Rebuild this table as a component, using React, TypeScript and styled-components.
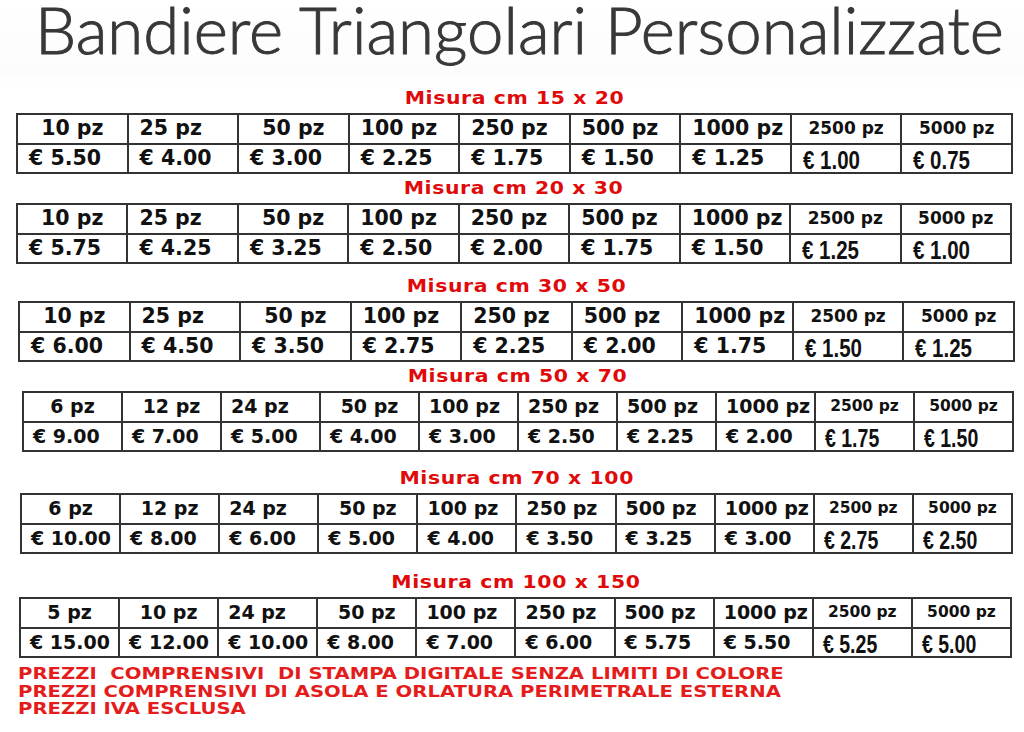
import React from "react";
import styled, { createGlobalStyle } from "styled-components";

const GlobalStyle = createGlobalStyle`
  html, body { margin: 0; padding: 0; background: #ffffff; }
  body { font-family: "DejaVu Sans", "Liberation Sans", sans-serif; color: #111; }
  * { box-sizing: border-box; }
`;

type Section = {
  size: string;
  qty: string[];
  prices: string[];
  gap: number;
  left: number;
  right: number;
};

const q9 = ["10 pz", "25 pz", "50 pz", "100 pz", "250 pz", "500 pz", "1000 pz", "2500 pz", "5000 pz"];
const q10 = ["6 pz", "12 pz", "24 pz", "50 pz", "100 pz", "250 pz", "500 pz", "1000 pz", "2500 pz", "5000 pz"];

const centered9 = [0, 2, 7, 8];
const centered10 = [0, 1, 3, 8, 9];

const sections: Section[] = [
  { size: "15 x 20", qty: q9, prices: ["5.50", "4.00", "3.00", "2.25", "1.75", "1.50", "1.25", "1.00", "0.75"], gap: 2, left: 16, right: 11 },
  { size: "20 x 30", qty: q9, prices: ["5.75", "4.25", "3.25", "2.50", "2.00", "1.75", "1.50", "1.25", "1.00"], gap: 4, left: 16, right: 12 },
  { size: "30 x 50", qty: q9, prices: ["6.00", "4.50", "3.50", "2.75", "2.25", "2.00", "1.75", "1.50", "1.25"], gap: 12, left: 18, right: 9 },
  { size: "50 x 70", qty: q10, prices: ["9.00", "7.00", "5.00", "4.00", "3.00", "2.50", "2.25", "2.00", "1.75", "1.50"], gap: 4, left: 22, right: 10 },
  { size: "70 x 100", qty: q10, prices: ["10.00", "8.00", "6.00", "5.00", "4.00", "3.50", "3.25", "3.00", "2.75", "2.50"], gap: 16, left: 20, right: 11 },
  { size: "100 x 150", qty: ["5 pz", "10 pz", "24 pz", "50 pz", "100 pz", "250 pz", "500 pz", "1000 pz", "2500 pz", "5000 pz"], prices: ["15.00", "12.00", "10.00", "8.00", "7.00", "6.00", "5.75", "5.50", "5.25", "5.00"], gap: 18, left: 19, right: 12 },
];

const Page = styled.div`
  width: 1024px;
  display: flex;
  flex-direction: column;
`;

const TitleBar = styled.header`
  height: 86px;
  padding-left: 14px;
  display: flex;
  justify-content: center;
  align-items: flex-start;
  background: linear-gradient(#ffffff, #fcfcfc 85%, #ffffff);
`;

const Title = styled.h1`
  margin: 0;
  display: inline-block;
  font-family: Lato, "Open Sans", sans-serif;
  font-weight: 300;
  font-size: 66px;
  line-height: 58px;
  color: #383838;
  white-space: nowrap;
  transform: scaleX(0.99);
  -webkit-text-stroke: 0.9px #383838;
  text-shadow: 0 0 1px #9a9a9a;
`;

const Block = styled.section<{ $gap: number; $left: number; $right: number }>`
  margin: ${(p) => p.$gap}px ${(p) => p.$right}px 0 ${(p) => p.$left}px;
  display: flex;
  flex-direction: column;
`;

const SizeHeading = styled.h2`
  margin: 0;
  height: 20px;
  display: flex;
  justify-content: center;
`;

const SizeText = styled.span`
  display: inline-block;
  line-height: 20px;
  font-family: "DejaVu Sans", "Liberation Sans", sans-serif;
  font-weight: 700;
  font-size: 17px;
  letter-spacing: 0.5px;
  color: #e00a0a;
  white-space: nowrap;
  transform: scaleX(1.2);
`;

const PriceTable = styled.table`
  margin-top: 5px;
  width: 100%;
  table-layout: fixed;
  border-collapse: separate;
  border-spacing: 0;
  border-top: 2px solid #333;
  border-left: 2px solid #333;
`;

const Cell = styled.td<{ $head?: boolean; $center?: boolean; $big: boolean; $tail: boolean }>`
  height: 29.5px;
  padding: 0 0 0 ${(p) => (p.$center ? 0 : p.$big ? 11 : 9)}px;
  border-right: 2px solid #333;
  border-bottom: 2px solid #333;
  font-family: "DejaVu Sans", "Liberation Sans", sans-serif;
  font-weight: 700;
  font-size: ${(p) => (p.$tail && p.$head ? (p.$big ? 17 : 15.5) : p.$big ? 20.5 : 19)}px;
  line-height: 27px;
  white-space: nowrap;
  text-align: ${(p) => (p.$center ? "center" : "left")};
  color: #111;
  vertical-align: middle;
`;

const NarrowPrice = styled.span<{ $big: boolean }>`
  display: block;
  height: 27px;
  font-family: "Liberation Sans", Arial, sans-serif;
  font-weight: 700;
  font-size: 25px;
  line-height: 27px;
  transform-origin: left center;
  transform: translateY(2px) scaleX(${(p) => (p.$big ? 0.82 : 0.78)});
`;

const Notes = styled.footer`
  margin: 7px 0 0 18px;
  display: flex;
  flex-direction: column;
  align-items: flex-start;
`;

const Note = styled.p`
  margin: 0;
  font-family: "DejaVu Sans", "Liberation Sans", sans-serif;
  font-weight: 700;
  font-size: 16.5px;
  line-height: 17.5px;
  color: #e41c1c;
  white-space: pre;
  transform-origin: left center;
  transform: scaleX(1.19);
`;

function PriceBlock({ s }: { s: Section }) {
  const big = s.qty.length === 9;
  const n = s.qty.length;
  const centered = big ? centered9 : centered10;
  return (
    <Block $gap={s.gap} $left={s.left} $right={s.right}>
      <SizeHeading>
        <SizeText>Misura cm {s.size}</SizeText>
      </SizeHeading>
      <PriceTable>
        <tbody>
          <tr>
            {s.qty.map((q, i) => (
              <Cell key={q} $head $center={centered.includes(i)} $big={big} $tail={i >= n - 2}>
                {q}
              </Cell>
            ))}
          </tr>
          <tr>
            {s.prices.map((p, i) => (
              <Cell key={i} $big={big} $tail={i >= n - 2}>
                {i >= n - 2 ? <NarrowPrice $big={big}>€ {p}</NarrowPrice> : `€ ${p}`}
              </Cell>
            ))}
          </tr>
        </tbody>
      </PriceTable>
    </Block>
  );
}

export default function App() {
  return (
    <>
      <GlobalStyle />
      <Page>
        <TitleBar>
          <Title>Bandiere Triangolari Personalizzate</Title>
        </TitleBar>
        {sections.map((s) => (
          <PriceBlock key={s.size} s={s} />
        ))}
        <Notes>
          <Note>{"PREZZI  COMPRENSIVI  DI STAMPA DIGITALE SENZA LIMITI DI COLORE"}</Note>
          <Note>PREZZI COMPRENSIVI DI ASOLA E ORLATURA PERIMETRALE ESTERNA</Note>
          <Note>PREZZI IVA ESCLUSA</Note>
        </Notes>
      </Page>
    </>
  );
}
